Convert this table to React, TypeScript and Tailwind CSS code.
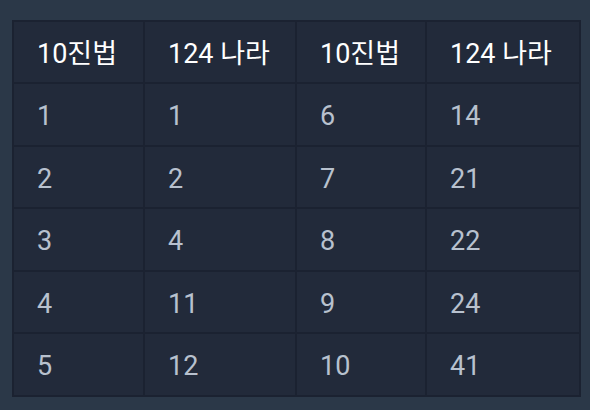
import React from "react";

const rows = [
  ["1", "1", "6", "14"],
  ["2", "2", "7", "21"],
  ["3", "4", "8", "22"],
  ["4", "11", "9", "24"],
  ["5", "12", "10", "41"],
];
const widths = ["w-[131px]", "w-[152px]", "w-[130px]", "w-[154px]"];

export default function App() {
  return (
    <div
      className="w-[590px] h-[410px] bg-[#2b3848] pt-[20px] pl-[12px]"
      style={{ fontFamily: 'Roboto, "Noto Sans CJK KR", sans-serif' }}
    >
      <table className="border-collapse border-2 border-[#1b2231] bg-[#222a3a] table-fixed w-[568px]">
        <thead>
          <tr className="h-[62px]">
            {["10진법", "124 나라", "10진법", "124 나라"].map((h, i) => (
              <th
                key={i}
                className={`${widths[i]} border-2 border-[#1b2231] text-left font-normal text-white text-[27px] pl-[23px] pr-0 pt-[5px] pb-0`}
              >
                {h}
              </th>
            ))}
          </tr>
        </thead>
        <tbody>
          {rows.map((r, ri) => (
            <tr key={ri} className="h-[62.6px]">
              {r.map((c, ci) => (
                <td
                  key={ci}
                  className="border-2 border-[#1b2231] text-[#b8c1ce] text-[27px] pl-[23px] pt-[4px] pb-0"
                >
                  {c}
                </td>
              ))}
            </tr>
          ))}
        </tbody>
      </table>
    </div>
  );
}
